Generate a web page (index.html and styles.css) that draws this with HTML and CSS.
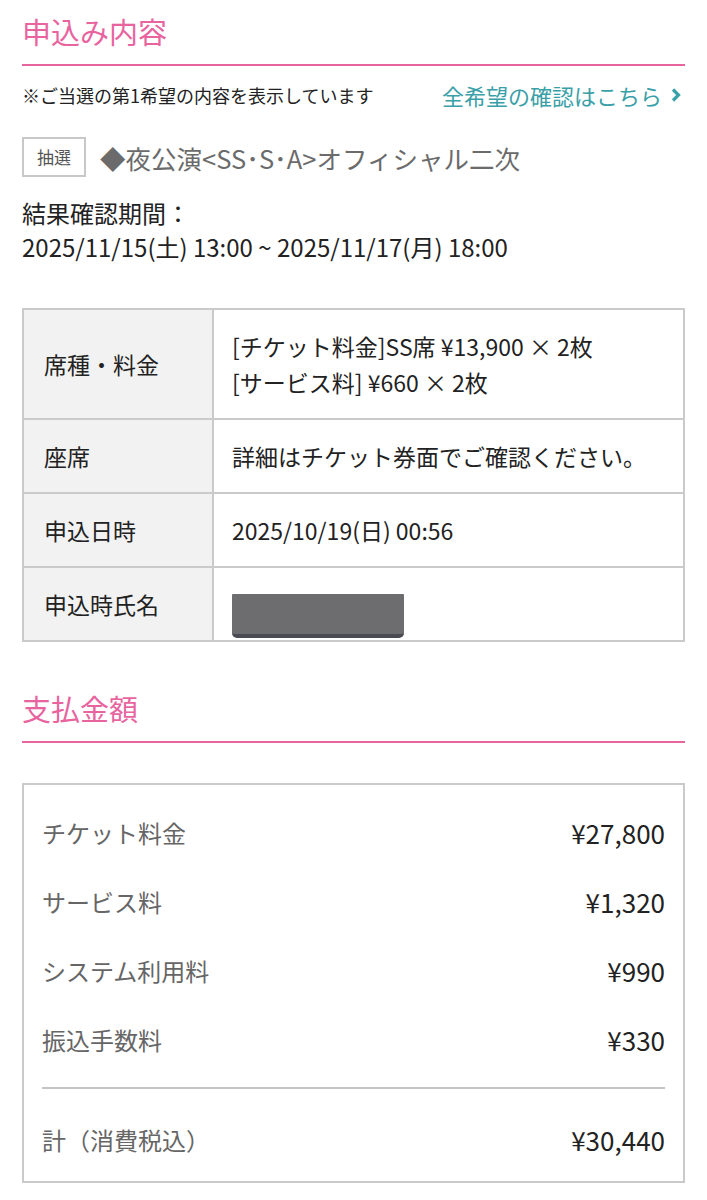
FILE: index.html
```html
<!DOCTYPE html>
<html lang="ja">
<head>
  <meta charset="UTF-8">
  <meta name="viewport" content="width=device-width, initial-scale=1.0">
  <title>申込み内容</title>
  <link rel="stylesheet" href="styles.css">
</head>
<body>
  <div class="wrap">
    <!-- 申込み内容 -->
    <h2 class="sec_title">申込み内容</h2>
    <div class="note_row">
      <p class="note">※ご当選の第1希望の内容を表示しています</p>
      <a class="all_link" href="#">全希望の確認はこちら<svg class="chev" width="12" height="16" viewBox="0 0 12 16"><polyline points="3,2.5 8.5,8 3,13.5" fill="none" stroke="#3aa0a8" stroke-width="3.2"/></svg></a>
    </div>
    <div class="perf_row">
      <span class="badge">抽選</span>
      <span class="perf_name">◆夜公演&lt;SS･S･A&gt;オフィシャル二次</span>
    </div>
    <p class="period_label">結果確認期間：</p>
    <p class="period">2025/11/15(土) 13:00 ~ 2025/11/17(月) 18:00</p>

    <table class="detail">
      <tr>
        <th>席種・料金</th>
        <td>[チケット料金]SS席 ¥13,900 × 2枚<br>[サービス料] ¥660 × 2枚</td>
      </tr>
      <tr>
        <th>座席</th>
        <td>詳細はチケット券面でご確認ください。</td>
      </tr>
      <tr>
        <th>申込日時</th>
        <td>2025/10/19(日) 00:56</td>
      </tr>
      <tr>
        <th>申込時氏名</th>
        <td class="name_cell"><span class="masked"></span></td>
      </tr>
    </table>

    <!-- 支払金額 -->
    <h2 class="sec_title pay_title">支払金額</h2>
    <div class="pay_box">
      <div class="pay_row"><span class="label">チケット料金</span><span class="price">¥27,800</span></div>
      <div class="pay_row"><span class="label">サービス料</span><span class="price">¥1,320</span></div>
      <div class="pay_row"><span class="label">システム利用料</span><span class="price">¥990</span></div>
      <div class="pay_row"><span class="label">振込手数料</span><span class="price">¥330</span></div>
      <div class="pay_line"></div>
      <div class="pay_row total"><span class="label">計（消費税込）</span><span class="price">¥30,440</span></div>
    </div>
  </div>
</body>
</html>
```

FILE: styles.css
```css
* {
  margin: 0;
  padding: 0;
  box-sizing: border-box;
}
body {
  font-family: "Noto Sans CJK JP", "Noto Sans", sans-serif;
  color: #222;
  background-color: #fff;
}
.wrap {
  padding: 0 22px;
}
.sec_title {
  margin-top: 11px;
  padding-bottom: 13px;
  font-size: 29px;
  line-height: 40px;
  font-weight: 400;
  color: #e8649f;
  border-bottom: 2px solid #e8649f;
}
.note_row {
  display: flex;
  justify-content: space-between;
  align-items: center;
  margin-top: 14px;
  height: 30px;
}
.note {
  font-size: 18px;
  color: #222;
}
.all_link {
  display: flex;
  align-items: center;
  font-size: 22px;
  color: #3aa0a8;
  text-decoration: none;
}
.chev {
  margin-left: 8px;
  margin-right: 3px;
}
.perf_row {
  display: flex;
  align-items: center;
  margin-top: 27px;
}
.badge {
  width: 64px;
  height: 40px;
  border: 2px solid #c8c8c8;
  font-size: 17px;
  line-height: 36px;
  text-align: center;
  color: #555;
}
.perf_name {
  margin-left: 14px;
  font-size: 25.5px;
  color: #6b6b6b;
}
.period_label {
  margin-top: 19px;
  font-size: 24px;
  line-height: 34px;
}
.period {
  font-size: 24px;
  line-height: 34px;
}
.detail {
  width: 100%;
  margin-top: 44px;
  border-collapse: collapse;
  font-size: 23px;
  line-height: 36px;
}
.detail th,
.detail td {
  border: 2px solid #cacaca;
  padding: 18px 18px;
  text-align: left;
  vertical-align: middle;
  font-weight: 400;
}
.detail th {
  width: 190px;
  padding-left: 20px;
  background-color: #f2f2f2;
}
.detail .name_cell {
  padding: 26px 18px 0;
  vertical-align: top;
}
.masked {
  display: block;
  width: 172px;
  height: 44px;
  background-color: #6d6d6f;
  border-bottom: 4px solid #4a4a52;
  border-radius: 1px 1px 5px 5px;
}
.pay_title {
  margin-top: 46px;
}
.pay_box {
  margin-top: 40px;
  padding: 13px 18px 7px;
  border: 2px solid #cacaca;
}
.pay_row {
  display: flex;
  justify-content: space-between;
  align-items: center;
  height: 69px;
}
.label {
  font-size: 24px;
  color: #666;
}
.price {
  font-size: 26px;
  font-weight: 400;
  color: #222;
}
.pay_line {
  height: 2px;
  margin-top: 13px;
  background-color: #c4c4c4;
}
.pay_row.total {
  margin-top: 16px;
}
```
